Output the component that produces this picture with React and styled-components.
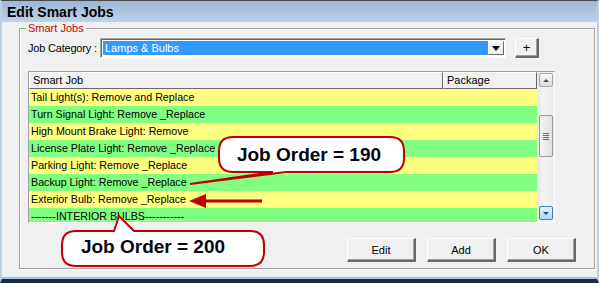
import styled, { createGlobalStyle } from "styled-components";

const GlobalStyle = createGlobalStyle`
  html, body {
    margin: 0;
    padding: 0;
    background: #f0f0f0;
  }
  * {
    box-sizing: border-box;
  }
`;

const Window = styled.div`
  position: relative;
  width: 599px;
  height: 283px;
  display: flex;
  flex-direction: column;
  background: #f0f0f0;
  border-top: 1px solid #4a4a4a;
  border-left: 2px solid #b9cfe6;
  border-right: 2px solid #b9cfe6;
  border-bottom: 4px solid #1b2b44;
  box-shadow: inset 0 -2px 0 #9cc4e8;
  font-family: "Liberation Sans", Arial, sans-serif;
  font-size: 11px;
  color: #000;
  overflow: hidden;
`;

const TitleBar = styled.div`
  height: 21px;
  margin: 0 -2px;
  padding: 1px 0 0 7px;
  display: flex;
  align-items: center;
  background: linear-gradient(#9db7d5, #bcd2ea);
  font-size: 14px;
  font-weight: bold;
`;

const Body = styled.div`
  flex: 1;
  padding: 6px 2px 0 17px;
`;

const Group = styled.div`
  position: relative;
  height: 241px;
  border: 1px solid #a0a0a0;
  box-shadow: inset 1px 1px 0 #fff, 1px 1px 0 #fff;
  padding: 9px 18px 0 8px;
  display: flex;
  flex-direction: column;
`;

const Legend = styled.span`
  position: absolute;
  top: -7px;
  left: 6px;
  padding: 0 2px;
  background: #f0f0f0;
  color: #cc0000;
  line-height: 13px;
`;

const CategoryRow = styled.div`
  display: flex;
  align-items: center;
  height: 20px;
`;

const Label = styled.span`
  width: 72px;
  letter-spacing: -0.2px;
`;

const Select = styled.div`
  width: 406px;
  height: 20px;
  display: flex;
  padding: 2px 1px 2px 2px;
  border-top: 1px solid #a0a0a0;
  border-left: 1px solid #a0a0a0;
  border-right: 1px solid #fff;
  border-bottom: 1px solid #fff;
  box-shadow: inset 1px 1px 0 #696969;
  background: #fff;
`;

const SelectValue = styled.div`
  flex: 1;
  background: #3399ff;
  color: #fff;
  padding-left: 2px;
  line-height: 14px;
  outline: 1px dotted #d07000;
  outline-offset: -1px;
`;

const DropButton = styled.div`
  width: 16px;
  display: flex;
  align-items: center;
  justify-content: center;
  background: #f0f0f0;
  border-top: 1px solid #fff;
  border-left: 1px solid #fff;
  border-right: 1px solid #696969;
  border-bottom: 1px solid #696969;
  &::after {
    content: "";
    border-left: 4px solid transparent;
    border-right: 4px solid transparent;
    border-top: 5px solid #000;
  }
`;

const Button = styled.button`
  width: ${(p) => p.$w}px;
  height: ${(p) => p.$h}px;
  margin-left: ${(p) => p.$ml || 0}px;
  padding: 0;
  background: #f0f0f0;
  border-top: 1px solid #fff;
  border-left: 1px solid #fff;
  border-right: 2px solid #696969;
  border-bottom: 2px solid #696969;
  box-shadow: inset -1px -1px 0 #a0a0a0;
  font-family: "Liberation Sans", Arial, sans-serif;
  font-size: ${(p) => p.$fs || 11}px;
  color: #000;
`;

const List = styled.div`
  margin-top: 13px;
  width: 527px;
  height: 152px;
  display: grid;
  grid-template-columns: 1fr 17px;
  border-top: 1px solid #a0a0a0;
  border-left: 1px solid #a0a0a0;
  border-right: 1px solid #fff;
  border-bottom: 1px solid #fff;
  background: #fff;
  overflow: hidden;
`;

const Rows = styled.div`
  display: flex;
  flex-direction: column;
  overflow: hidden;
`;

const Header = styled.div`
  display: grid;
  grid-template-columns: 414px 94px;
  height: 17px;
  flex: none;
`;

const HeaderCell = styled.div`
  padding-left: 3px;
  line-height: 14px;
  background: #f0f0f0;
  border-top: 1px solid #fff;
  border-left: 1px solid #fff;
  border-right: 1px solid #696969;
  border-bottom: 1px solid #696969;
`;

const Row = styled.div`
  flex: none;
  height: 17px;
  line-height: 17px;
  padding-left: 2px;
  white-space: nowrap;
  font-size: 10.7px;
  background: ${(p) => (p.$green ? "#80ff80" : "#ffff80")};
`;

const Scrollbar = styled.div`
  display: flex;
  flex-direction: column;
  align-items: center;
  padding: 1px 0 2px 0;
  background: linear-gradient(90deg, #e6e6e6, #f3f3f3 40%, #ececec);
`;

const ScrollButton = styled.div`
  width: 14px;
  height: 14px;
  flex: none;
  display: flex;
  align-items: center;
  justify-content: center;
  border-radius: 2px;
  border: 1px solid ${(p) => (p.$hot ? "#3c7fb1" : "#a8a8a8")};
  background: ${(p) =>
    p.$hot
      ? "linear-gradient(#e4f2fb, #b2d6f2)"
      : "linear-gradient(#fafafa, #dcdcdc)"};
  &::after {
    content: "";
    border-left: 3px solid transparent;
    border-right: 3px solid transparent;
    ${(p) =>
      p.$up
        ? "border-bottom: 3px solid #505050;"
        : "border-top: 3px solid #1d4f7c;"}
  }
`;

const Thumb = styled.div`
  margin-top: 28px;
  width: 14px;
  height: 42px;
  flex: none;
  border: 1px solid #9a9a9a;
  border-radius: 2px;
  background: linear-gradient(90deg, #f4f4f4, #e2e2e2);
  display: flex;
  flex-direction: column;
  align-items: center;
  justify-content: center;
  gap: 1px;
`;

const Grip = styled.span`
  width: 6px;
  height: 1px;
  background: #6a6a6a;
`;

const Spacer = styled.div`
  flex: 1;
`;

const Buttons = styled.div`
  margin-top: 15px;
  display: flex;
  justify-content: flex-end;
`;

const Annotations = styled.svg`
  position: absolute;
  inset: 0;
  pointer-events: none;
`;

const CalloutText = styled.text`
  font-family: "Liberation Sans", Arial, sans-serif;
  font-size: 19px;
  font-weight: bold;
  fill: #050510;
`;

const rows = [
  "Tail Light(s): Remove and Replace",
  "Turn Signal Light: Remove _Replace",
  "High Mount Brake Light: Remove",
  "License Plate Light: Remove _Replace",
  "Parking Light: Remove _Replace",
  "Backup Light: Remove _Replace",
  "Exterior Bulb: Remove _Replace",
  "-------INTERIOR BULBS-----------",
];

export default function App() {
  return (
    <>
      <GlobalStyle />
      <Window>
        <TitleBar>Edit Smart Jobs</TitleBar>
        <Body>
          <Group>
            <Legend>Smart Jobs</Legend>
            <CategoryRow>
              <Label>Job Category :</Label>
              <Select>
                <SelectValue>Lamps &amp; Bulbs</SelectValue>
                <DropButton />
              </Select>
              <Button $w={24} $h={20} $ml={9} $fs={13}>
                +
              </Button>
            </CategoryRow>

            <List>
              <Rows>
                <Header>
                  <HeaderCell>Smart Job</HeaderCell>
                  <HeaderCell>Package</HeaderCell>
                </Header>
                {rows.map((r, i) => (
                  <Row key={r} $green={i % 2 === 1}>
                    {r}
                  </Row>
                ))}
              </Rows>
              <Scrollbar>
                <ScrollButton $up />
                <Thumb>
                  <Grip />
                  <Grip />
                  <Grip />
                  <Grip />
                </Thumb>
                <Spacer />
                <ScrollButton $hot />
              </Scrollbar>
            </List>

            <Buttons>
              <Button $w={69} $h={24}>Edit</Button>
              <Button $w={69} $h={24} $ml={11}>Add</Button>
              <Button $w={69} $h={24} $ml={11}>OK</Button>
            </Buttons>
          </Group>
        </Body>

        <Annotations width="599" height="283" viewBox="0 0 599 283">
          <path
            d="M231,136 H388 Q402,136 402,150 V157 Q402,171 388,171 H284 L188,183 L271,171 H231 Q217,171 217,157 V150 Q217,136 231,136 Z"
            fill="#fff"
            stroke="#c00000"
            strokeWidth="2"
          />
          <CalloutText x="307" y="160" textAnchor="middle">
            Job Order = 190
          </CalloutText>

          <line x1="260" y1="200" x2="200" y2="200" stroke="#c00000" strokeWidth="3" />
          <polygon points="187,200 204,193 204,207" fill="#c00000" />

          <path
            d="M74,230 H112 L117,215 L132,230 H248 Q262,230 262,244 V251 Q262,265 248,265 H74 Q60,265 60,251 V244 Q60,230 74,230 Z"
            fill="#fff"
            stroke="#c00000"
            strokeWidth="2"
          />
          <CalloutText x="151" y="252" textAnchor="middle">
            Job Order = 200
          </CalloutText>
        </Annotations>
      </Window>
    </>
  );
}
